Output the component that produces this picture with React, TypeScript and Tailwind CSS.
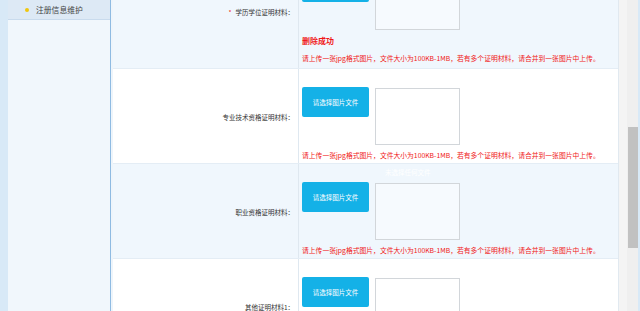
const font = { fontFamily: '"Noto Sans CJK SC", "Noto Sans", sans-serif' };

const NOTICE = '请上传一张jpg格式图片，文件大小为100KB-1MB，若有多个证明材料，请合并到一张图片中上传。';

function UploadCell({ deleted, hint }: { deleted?: boolean; hint?: string }) {
  return (
    <div className="flex-1 pl-[3px] pt-[18px] pb-[3px]">
      <div className="flex items-start">
        <button className="w-[67px] h-[30px] rounded-[2px] bg-[#14b1e7] text-white text-[6.5px] leading-none">
          请选择图片文件
        </button>
        <div className="relative ml-[6px] mt-[1px]">
          {hint && (
            <div className="absolute -top-[15px] left-[10px] text-[6.5px] text-white whitespace-nowrap">{hint}</div>
          )}
          <div className="w-[85px] h-[57px] border border-[#d2d6da] bg-white/40" />
        </div>
      </div>
      {deleted && (
        <div className="mt-[5px] text-[8px] leading-[11px] font-bold text-[#f01818]">删除成功</div>
      )}
      <div className={`${deleted ? 'mt-[7px] pb-[2px]' : 'mt-[5px]'} text-[6.8px] leading-[10px] text-[#f01818] whitespace-nowrap`}>
        {NOTICE}
      </div>
    </div>
  );
}

function Row({ label, required, bg, deleted, hint }: { label: string; required?: boolean; bg: string; deleted?: boolean; hint?: string }) {
  return (
    <div className={`flex border-b border-[#e4edf5] ${bg}`}>
      <div className="w-[186px] shrink-0 border-r border-[#dfe8f0] flex items-center justify-end pr-[4px] pt-[3px] text-[6.5px] text-[#333]">
        {required && <span className="text-[#f01818] mr-[4px]">*</span>}
        {label}
      </div>
      <UploadCell deleted={deleted} hint={hint} />
    </div>
  );
}

export default function App() {
  return (
    <div className="flex h-[311px] w-[640px] overflow-hidden bg-white" style={font}>
      <div className="w-[8px] shrink-0 bg-[#d8e9f7]" />
      <aside className="w-[103px] shrink-0 bg-[#f1f7fc] border-r border-[#8fbbe2]">
        <div className="h-[20px] flex items-center bg-[#dde9f5] border-b border-[#c9dbed]">
          <span className="ml-[17px] w-[4px] h-[4px] rounded-full bg-[#f0c60c]" />
          <span className="ml-[7px] text-[7.8px] text-[#444]">注册信息维护</span>
        </div>
      </aside>
      <div className="w-[2px] shrink-0 bg-[#eef5fb]" />
      <main className="w-[506px] shrink-0 border-r border-[#e1e9f0] overflow-hidden">
        <div className="-mt-[46px]">
          <Row label="学历学位证明材料：" required bg="bg-[#f0f7fd]" deleted />
          <Row label="专业技术资格证明材料：" bg="bg-white" />
          <Row label="职业资格证明材料：" bg="bg-[#f0f7fd]" hint="未选择任何文件" />
          <Row label="其他证明材料1：" bg="bg-white" />
        </div>
      </main>
      <div className="w-[8px] shrink-0 bg-[#f4f4f4]" />
      <div className="w-[13px] shrink-0 bg-[#efefef] pt-[127px] pl-[1px] border-r-[2px] border-[#d8e9f7]">
        <div className="w-[10px] h-[121px] bg-[#c1c1c1]" />
      </div>
    </div>
  );
}
